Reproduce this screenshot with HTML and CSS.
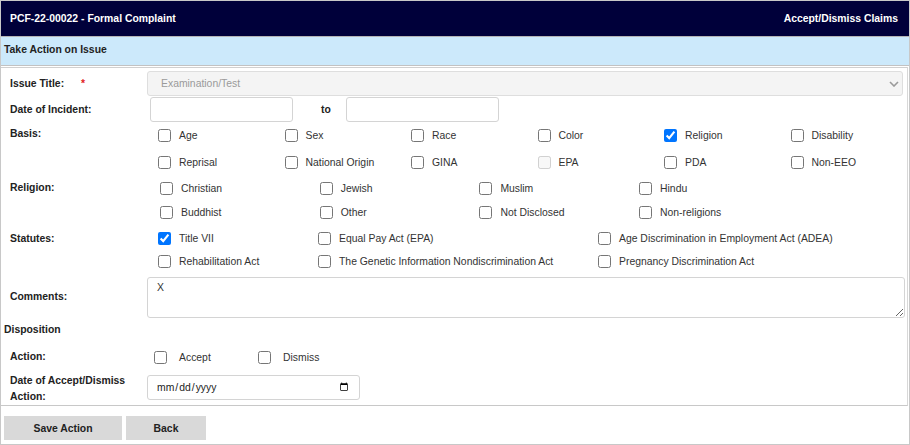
FILE: index.html
```html
<!DOCTYPE html>
<html lang="en">
<head>
    <meta charset="UTF-8">
    <meta name="viewport" content="width=device-width, initial-scale=1.0">
    <title>Accept/Dismiss Claims</title>

    <link rel="stylesheet" href="styles.css">
</head>
<body>
    <div class="page">
        <header class="topbar">
            <h1>PCF-22-00022 - Formal Complaint</h1>
            <p>Accept/Dismiss Claims</p>
        </header>
        <div class="subbar">Take Action on Issue</div>

        <form class="panel">
            <div class="row row-title">
                <span class="lbl">Issue Title: <b class="req">*</b></span>
                <div class="field selectwrap">
                    <select disabled>
                        <option>Examination/Test</option>
                    </select>
                    <svg class="chev" width="10" height="6" viewBox="0 0 10 6"><path d="M1 1l4 4 4-4" fill="none" stroke="#9a9a9a" stroke-width="1.6"/></svg>
                </div>
            </div>

            <div class="row row-date">
                <span class="lbl">Date of Incident:</span>
                <div class="field dates">
                    <input type="text" class="txt d1">
                    <span class="to">to</span>
                    <input type="text" class="txt d2">
                </div>
            </div>

            <div class="row row-basis">
                <span class="lbl">Basis:</span>
                <div class="field grid basis">
                    <label class="chk"><input type="checkbox"> Age</label>
                    <label class="chk"><input type="checkbox"> Sex</label>
                    <label class="chk"><input type="checkbox"> Race</label>
                    <label class="chk"><input type="checkbox"> Color</label>
                    <label class="chk"><input type="checkbox" checked> Religion</label>
                    <label class="chk"><input type="checkbox"> Disability</label>
                    <label class="chk"><input type="checkbox"> Reprisal</label>
                    <label class="chk"><input type="checkbox"> National Origin</label>
                    <label class="chk"><input type="checkbox"> GINA</label>
                    <label class="chk"><input type="checkbox" disabled> EPA</label>
                    <label class="chk"><input type="checkbox"> PDA</label>
                    <label class="chk"><input type="checkbox"> Non-EEO</label>
                </div>
            </div>

            <div class="row row-religion">
                <span class="lbl">Religion:</span>
                <div class="field grid religion">
                    <label class="chk"><input type="checkbox"> Christian</label>
                    <label class="chk"><input type="checkbox"> Jewish</label>
                    <label class="chk"><input type="checkbox"> Muslim</label>
                    <label class="chk"><input type="checkbox"> Hindu</label>
                    <label class="chk"><input type="checkbox"> Buddhist</label>
                    <label class="chk"><input type="checkbox"> Other</label>
                    <label class="chk"><input type="checkbox"> Not Disclosed</label>
                    <label class="chk"><input type="checkbox"> Non-religions</label>
                </div>
            </div>

            <div class="row row-statutes">
                <span class="lbl">Statutes:</span>
                <div class="field grid statutes">
                    <label class="chk"><input type="checkbox" checked> Title VII</label>
                    <label class="chk"><input type="checkbox"> Equal Pay Act (EPA)</label>
                    <label class="chk"><input type="checkbox"> Age Discrimination in Employment Act (ADEA)</label>
                    <label class="chk"><input type="checkbox"> Rehabilitation Act</label>
                    <label class="chk"><input type="checkbox"> The Genetic Information Nondiscrimination Act</label>
                    <label class="chk"><input type="checkbox"> Pregnancy Discrimination Act</label>
                </div>
            </div>

            <div class="row row-comments">
                <span class="lbl">Comments:</span>
                <div class="field">
                    <textarea>X</textarea>
                </div>
            </div>

            <h2 class="section">Disposition</h2>

            <div class="row row-action">
                <span class="lbl">Action:</span>
                <div class="field grid action">
                    <label class="chk"><input type="checkbox"> Accept</label>
                    <label class="chk"><input type="checkbox"> Dismiss</label>
                </div>
            </div>

            <div class="row row-actdate">
                <span class="lbl">Date of Accept/Dismiss<br>Action:</span>
                <div class="field">
                    <input type="date" class="datepick">
                </div>
            </div>
        </form>

        <div class="buttons">
            <button type="button" class="btn save">Save Action</button>
            <button type="button" class="btn back">Back</button>
        </div>
    </div>
</body>
</html>
```

FILE: styles.css
```css
html body{
    margin: 0;
    background-color: white;
    font-family: "Liberation Sans", Arial, sans-serif;
    font-size: 10.4px;
    color: #333;
}

.page{
    width: 910px;
    height: 445px;
    box-sizing: border-box;
    border: 1px solid #c8c8c8;
    overflow: hidden;
}

.topbar{
    display: flex;
    justify-content: space-between;
    align-items: center;
    height: 35px;
    padding: 0 11px 0 9px;
    background-color: #00003a;
    border-bottom: 1px solid #b5b5b5;
    color: white;
}

.topbar h1,
.topbar p{
    margin: 0;
    font-size: 10.4px;
    font-weight: bold;
}

.subbar{
    height: 28px;
    line-height: 25px;
    padding-left: 3px;
    background-color: #cce9fb;
    border-bottom: 1px solid #c2c2c2;
    font-weight: bold;
    color: #222;
}

.panel{
    margin: 1px 1px 0 0;
    padding: 3px 0 0 0;
    border-top: 1px solid #d0d0d0;
    border-bottom: 1px solid #c8c8c8;
    border-right: 1px solid #d8d8d8;
}

.row{
    display: flex;
    align-items: center;
}

.lbl{
    width: 137px;
    flex-shrink: 0;
    padding-left: 9px;
    font-weight: bold;
    color: #222;
    line-height: 16px;
}

.req{
    color: #e21b1b;
    margin-left: 14px;
}

.field{
    flex: 1;
}

/* issue title */
.row-title{
    height: 25px;
}

.selectwrap{
    position: relative;
    margin-right: 4px;
}

.selectwrap select{
    appearance: none;
    width: 100%;
    height: 25px;
    padding: 0 13px;
    background-color: #f4f4f4;
    border: 1px solid #dedede;
    border-radius: 3px;
    font-family: inherit;
    font-size: 10.4px;
    color: #9a9a9a;
    opacity: 1;
}

.chev{
    position: absolute;
    right: 4px;
    top: 10px;
}

/* dates */
.row-date{
    margin-top: 1px;
    height: 25px;
}

.dates{
    display: flex;
    align-items: center;
}

.txt{
    box-sizing: border-box;
    height: 25px;
    border: 1px solid #d4d4d4;
    border-radius: 3px;
}

.d1{
    width: 143px;
    margin-left: 3px;
}

.d2{
    width: 153px;
}

.to{
    width: 53px;
    padding-left: 28px;
    box-sizing: border-box;
    font-weight: bold;
    color: #222;
}

/* checkbox groups */
.grid{
    display: grid;
}

.chk{
    display: flex;
    align-items: center;
    gap: 8px;
    white-space: nowrap;
}

.chk input{
    margin: 0;
    width: 13px;
    height: 13px;
}

.row-basis{
    align-items: flex-start;
}

.row-basis .lbl{
    margin-top: 4px;
}

.basis{
    grid-template-columns: repeat(6, 126.5px);
    grid-auto-rows: 27px;
    padding-left: 11px;
}

.row-religion{
    align-items: flex-start;
}

.row-religion .lbl{
    margin-top: 4px;
}

.religion{
    grid-template-columns: repeat(4, 159.7px);
    grid-auto-rows: 24px;
    padding-left: 13px;
}

.row-statutes{
    align-items: flex-start;
    margin-top: 3px;
}

.row-statutes .lbl{
    margin-top: 4px;
}

.statutes{
    grid-template-columns: 160px 280px auto;
    grid-auto-rows: 23px;
    padding-left: 11px;
}

/* comments */
.row-comments{
    margin-top: 4px;
}

.row-comments .lbl{
    margin-top: -2px;
}

.row-comments textarea{
    display: block;
    box-sizing: border-box;
    width: 758px;
    height: 41px;
    padding: 4px 9px;
    border: 1px solid #d4d4d4;
    border-radius: 3px;
    font-family: inherit;
    font-size: 10.4px;
    color: #333;
}

.section{
    margin: 5px 0 0 3px;
    font-size: 10.4px;
    line-height: 14px;
    color: #222;
}

.row-action{
    height: 20px;
    margin-top: 10px;
}

.action{
    grid-template-columns: 104px 104px;
    padding-left: 7px;
}

.action .chk{
    gap: 12px;
}

.row-actdate{
    align-items: flex-start;
    margin-top: 6px;
}

.datepick{
    box-sizing: border-box;
    width: 213px;
    height: 25px;
    margin-top: 2px;
    padding: 0 8px;
    border: 1px solid #d4d4d4;
    border-radius: 3px;
    font-family: inherit;
    font-size: 10.4px;
    color: #222;
}

/* buttons */
.buttons{
    display: flex;
    gap: 4px;
    padding: 10px 0 0 3px;
}

.btn{
    height: 24px;
    border: none;
    background-color: #d9d9d9;
    font-family: inherit;
    font-size: 10.4px;
    font-weight: bold;
    color: #222;
}

.save{
    width: 118px;
}

.back{
    width: 80px;
}
```
